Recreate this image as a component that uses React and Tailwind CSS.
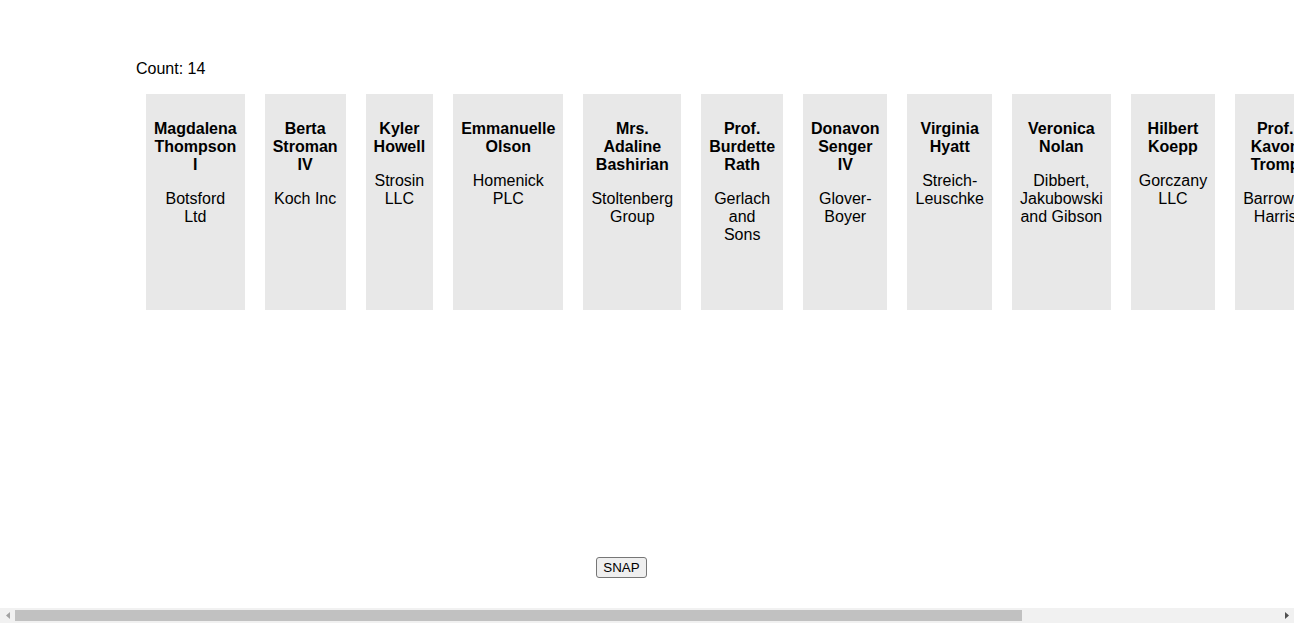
import React from "react";

const people = [
  ["Magdalena Thompson I", "Botsford Ltd"],
  ["Berta Stroman IV", "Koch Inc"],
  ["Kyler Howell", "Strosin LLC"],
  ["Emmanuelle Olson", "Homenick PLC"],
  ["Mrs. Adaline Bashirian", "Stoltenberg Group"],
  ["Prof. Burdette Rath", "Gerlach and Sons"],
  ["Donavon Senger IV", "Glover-Boyer"],
  ["Virginia Hyatt", "Streich-Leuschke"],
  ["Veronica Nolan", "Dibbert, Jakubowski and Gibson"],
  ["Hilbert Koepp", "Gorczany LLC"],
  ["Prof. Kavon Tromp", "Barrows-Harris"],
  ["Lonnie Ward", "Kunze Ltd"],
  ["Ezra Hayes", "Lang Group"],
  ["Wade Lind", "Hegmann Inc"],
];

function Scrollbar() {
  return (
    <div className="fixed bottom-0 left-0 flex h-[15px] w-full items-center bg-[#f1f1f1]">
      <div className="flex h-[15px] w-[15px] items-center justify-center">
        <svg width="4" height="7" viewBox="0 0 4 7">
          <path d="M4 0 L0 3.5 L4 7 Z" fill="#a3a3a3" />
        </svg>
      </div>
      <div className="h-[11px] w-[1007px] bg-[#c1c1c1]" />
      <div className="flex-1" />
      <div className="flex h-[15px] w-[15px] items-center justify-center">
        <svg width="4" height="7" viewBox="0 0 4 7">
          <path d="M0 0 L4 3.5 L0 7 Z" fill="#505050" />
        </svg>
      </div>
    </div>
  );
}

export default function App() {
  return (
    <div
      className="pl-[136px] pt-[60px] text-black"
      style={{ fontFamily: '"Liberation Sans", Arial, sans-serif' }}
    >
      <div className="text-[16px] leading-[18px]">Count: {people.length}</div>
      <div className="mt-[16px] flex">
        {people.map(([name, company]) => (
          <div
            key={name}
            className="mx-[10px] h-[216px] bg-[#e8e8e8] px-2 pt-[26px] text-center text-[16px] leading-[18px]"
          >
            <div className="font-bold">{name}</div>
            <div className="mt-4">{company}</div>
          </div>
        ))}
      </div>
      <div className="mt-[247px] flex w-[971px] justify-center">
        <button className="h-[21px] rounded-[3px] border border-[#767676] bg-[#efefef] px-[6px] text-[13.33px] leading-[15px] text-black">
          SNAP
        </button>
      </div>
      <Scrollbar />
    </div>
  );
}
